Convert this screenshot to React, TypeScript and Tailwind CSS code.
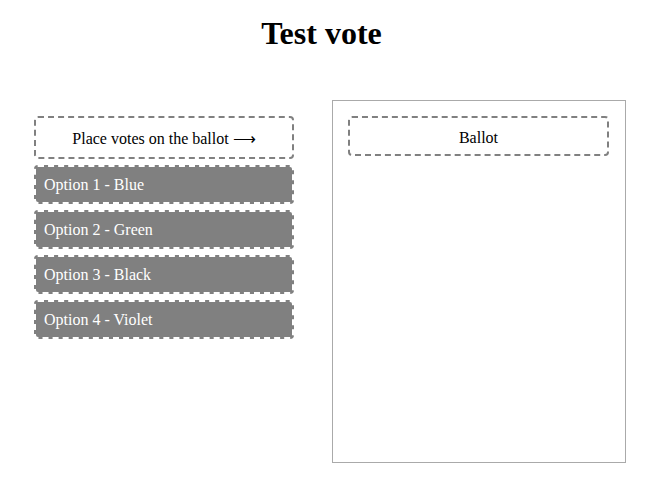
import React from "react";

const options = ["Option 1 - Blue", "Option 2 - Green", "Option 3 - Black", "Option 4 - Violet"];

export default function App() {
  return (
    <div className="w-[661px] h-[489px] bg-white text-black font-['Liberation_Serif',serif] overflow-hidden">
      <h1 className="w-[643px] pt-[15px] text-center text-[32px] font-bold leading-[normal]">Test vote</h1>
      <div className="flex mt-[48px]">
        <div className="ml-[34px] mt-[16px] w-[260px] flex flex-col gap-[6px]">
          <div className="h-[43px] pt-[3px] flex items-center justify-center border-2 border-dashed border-[#808080] rounded-[4px] text-[16px]">
            Place votes on the ballot ⟶
          </div>
          {options.map((o) => (
            <div
              key={o}
              className="h-[39px] flex items-center pl-[8px] bg-[#808080] border-2 border-dashed border-white rounded-[4px] text-white text-[16px]"
            >
              {o}
            </div>
          ))}
        </div>
        <div className="ml-[38px] w-[294px] h-[363px] border border-[#aaaaaa] pt-[15px] pl-[15px] pr-[16px]">
          <div className="h-[40px] pt-[3px] flex items-center justify-center border-2 border-dashed border-[#808080] rounded-[4px] text-[16px]">
            Ballot
          </div>
        </div>
      </div>
    </div>
  );
}
